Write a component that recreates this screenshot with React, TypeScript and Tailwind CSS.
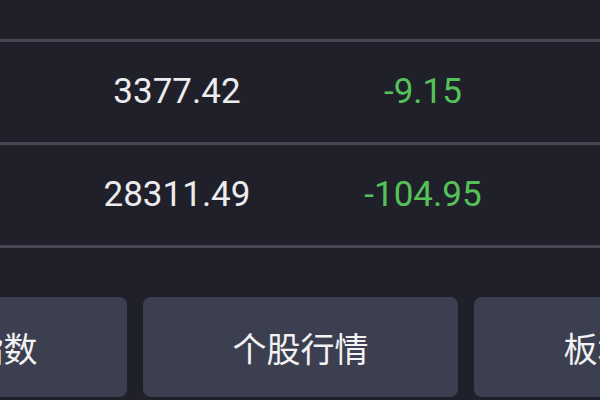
import React from 'react';

interface Quote {
    price: string;
    change: string;
}

const quotes: Quote[] = [
    { price: '1149.76', change: '-12.06' },
    { price: '3377.42', change: '-9.15' },
    { price: '28311.49', change: '-104.95' }
];

const tabs = ['大盘指数', '个股行情', '板块行情'];

export default function App() {
    return (
        <div
            className="w-[600px] h-[400px] overflow-hidden bg-[#20202b]"
            style={{ fontFamily: 'Roboto, "Noto Sans CJK SC", sans-serif' }}
        >
            {/* Quote rows, first one scrolled partly out of view */}
            <div className="flex flex-col -mt-[61px]">
                {quotes.map((q, idx) => (
                    <div
                        key={idx}
                        className="flex h-[103px] shrink-0 items-center border-b-[3px] border-[#464654]"
                    >
                        <div className="w-[54px] shrink-0" />
                        <div className="w-[246px] shrink-0 text-center text-[35px] text-[#ececef]">
                            {q.price}
                        </div>
                        <div className="w-[246px] shrink-0 text-center text-[35px] text-[#55c257]">
                            {q.change}
                        </div>
                    </div>
                ))}
            </div>

            {/* Bottom tabs */}
            <div className="flex gap-4 mt-[49px] -ml-[188px]">
                {tabs.map((t) => (
                    <div
                        key={t}
                        className="w-[315px] h-[100px] shrink-0 flex items-center justify-center rounded-lg bg-[#3b3f4f] text-[34px] text-[#f2f2f4]"
                        style={{ fontFamily: '"Noto Sans CJK SC", sans-serif' }}
                    >
                        {t}
                    </div>
                ))}
            </div>
        </div>
    );
}
